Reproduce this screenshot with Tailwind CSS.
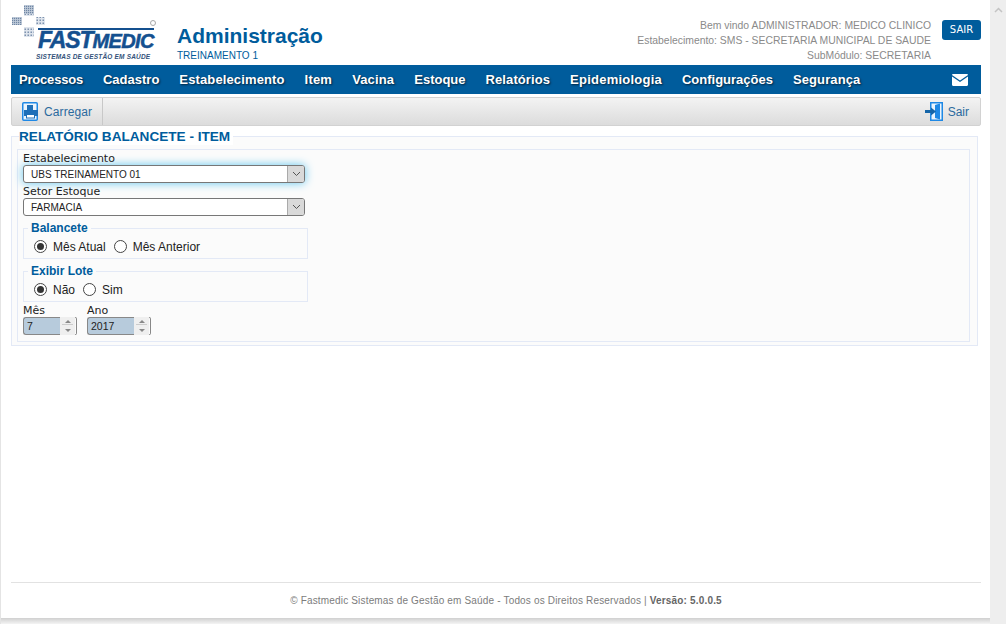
<!DOCTYPE html>
<html lang="pt-BR">
  <head>
    <meta charset="UTF-8" />
    <title>Administração</title>
    <script src="https://cdn.jsdelivr.net/npm/@tailwindcss/browser@4"></script>
  </head>
  <body class="bg-white overflow-hidden font-['Liberation_Sans',Arial,sans-serif]">
    <div class="flex w-[1006px] h-[624px]">
      <!-- page -->
      <div class="relative w-[990px] h-[624px] flex flex-col border-l border-[#e4e4e4] pl-[10px] pr-[9px]">
        <!-- header -->
        <header class="h-[65px] flex shrink-0">
          <div class="relative w-[166px] h-[65px]">
            <svg class="absolute left-[1px] top-[4px]" width="36" height="35" viewBox="0 0 36 35">
              <defs>
                <pattern id="dots" width="2" height="2" patternUnits="userSpaceOnUse">
                  <rect width="2" height="2" fill="#c3cedc" />
                  <rect width="1.2" height="1.2" fill="#6f86a4" />
                </pattern>
                <pattern id="rings" width="3" height="3" patternUnits="userSpaceOnUse">
                  <rect width="3" height="3" fill="#dfe5ed" />
                  <rect x="0.5" y="0.5" width="1.5" height="1.5" fill="#7d92ae" />
                </pattern>
              </defs>
              <rect x="12" y="1" width="10" height="9" fill="url(#dots)" />
              <rect x="12" y="10" width="10" height="2" fill="url(#rings)" />
              <rect x="0" y="13" width="10" height="8" fill="url(#dots)" />
              <rect x="24" y="13" width="9" height="8" fill="url(#rings)" />
              <rect x="12" y="23" width="10" height="10" fill="url(#rings)" />
            </svg>
            <div class="absolute left-[27px] top-[28px] w-[116px] h-[2px] bg-[#14508f]"></div>
            <div class="absolute left-[27px] top-[29px] w-[117px] text-[#14508f] text-[23px] leading-[23px] font-bold italic tracking-[-1.1px] whitespace-nowrap [-webkit-text-stroke:0.5px_#14508f]">FAST<span class="text-[20px] tracking-[-0.6px]">MEDIC</span></div>
            <div class="absolute left-[25px] top-[53px] text-[#33527a] text-[6.5px] leading-[8px] font-bold italic tracking-[0.18px] whitespace-nowrap">SISTEMAS DE GESTÃO EM SAÚDE</div>
            <div class="absolute left-[139px] top-[20px] w-[6px] h-[6px] rounded-full border border-[#a8a8a8]"></div>
          </div>
          <div class="pt-[23px]">
            <h1 class="text-[#005c9c] text-[21px] leading-[26px] font-bold">Administração</h1>
            <p class="text-[#005c9c] text-[10px] leading-[12px] mt-[1px]">TREINAMENTO 1</p>
          </div>
          <div class="ml-auto pt-[18px] text-right text-[#8a8a8a] text-[10.4px] leading-[15px]">
            <p>Bem vindo ADMINISTRADOR: MEDICO CLINICO</p>
            <p>Estabelecimento: SMS - SECRETARIA MUNICIPAL DE SAUDE</p>
            <p>SubMódulo: SECRETARIA</p>
          </div>
          <div class="w-[50px] pl-[11px] pt-[20px]">
            <button class="block w-[39px] h-[20px] rounded-[3px] bg-[#005c9c] text-white text-[10px] leading-[20px] font-['DejaVu_Sans',sans-serif]">SAIR</button>
          </div>
        </header>

        <!-- main menu -->
        <nav class="h-[29px] shrink-0 bg-[#005c9c] flex items-center pl-[8px] pr-[13px] gap-[20px] text-white text-[13px] font-bold [text-shadow:1px_1px_2px_#00213a]">
          <span class="tracking-[-0.2px]">Processos</span>
          <span>Cadastro</span>
          <span class="tracking-[0.13px]">Estabelecimento</span>
          <span class="tracking-[0.2px]">Item</span>
          <span class="tracking-[0.15px]">Vacina</span>
          <span>Estoque</span>
          <span class="tracking-[0.1px]">Relatórios</span>
          <span class="tracking-[0.23px]">Epidemiologia</span>
          <span>Configurações</span>
          <span class="tracking-[0.1px]">Segurança</span>
          <svg class="ml-auto" width="16" height="12" viewBox="0 0 16 12">
            <path d="M1.2 0h13.6c.6 0 1.2.5 1.2 1.1L8 6.6 0 1.1C0 .5.6 0 1.2 0z" fill="#fff" />
            <path d="M0 2.6v8.2c0 .7.5 1.2 1.2 1.2h13.6c.7 0 1.2-.5 1.2-1.2V2.6L8 8.1z" fill="#fff" />
          </svg>
        </nav>

        <!-- toolbar -->
        <div class="h-[29px] mt-[3px] shrink-0 flex items-center rounded-[2px] border border-[#d2d2d2] bg-gradient-to-b from-[#f3f3f3] to-[#dcdcdc] text-[#2b6a9e] text-[12px]">
          <div class="h-full flex items-center gap-[6px] pl-[10px] pr-[10px] border-r border-[#c8c8c8]">
            <svg width="16" height="19" viewBox="0 0 16 19">
              <rect x="0.75" y="0.75" width="14.5" height="17.5" rx="1" fill="#eaf4fd" stroke="#1e88e5" stroke-width="1.5" />
              <rect x="5" y="3" width="6" height="5" fill="#1e6fb8" />
              <rect x="2" y="8" width="14" height="6" fill="#1e6fb8" />
              <rect x="4.5" y="12.5" width="8" height="3.5" fill="#fff" stroke="#1e6fb8" />
            </svg>
            <span class="tracking-[0.1px]">Carregar</span>
          </div>
          <div class="ml-auto flex items-center gap-[5px] pr-[11px]">
            <svg width="18" height="19" viewBox="0 0 18 19">
              <path d="M5.75.75h11.5v17.5H5.75z" fill="#eaf4fd" stroke="#1e88e5" stroke-width="1.5" />
              <path d="M10 3l5-1.5v16L10 16z" fill="#1e88e5" />
              <path d="M0 8h6V5.5l5 4-5 4V11H0z" fill="#1565a8" />
            </svg>
            <span>Sair</span>
          </div>
        </div>

        <!-- report form -->
        <fieldset class="mt-[2px] w-[967px] h-[218px] shrink-0 border border-[#e3e9f6] pl-[5px] pr-[7px] pb-[3px] bg-[#fbfbfb]">
          <legend class="ml-[2px] pr-[3px] bg-white text-[#005c9c] text-[13.6px] leading-[17px] font-bold">RELATÓRIO BALANCETE - ITEM</legend>
          <div class="h-[193px] mt-[4px] border border-[#e3e9f6] pl-[5px] text-[#222] font-['DejaVu_Sans',sans-serif] text-[11px]">
            <label class="block mt-[2px] leading-[13px]">Estabelecimento</label>
            <div class="w-[282px] h-[18px] flex items-center rounded-[3px] border border-[#777] bg-white shadow-[0_0_10px_#62c6ee] font-['Liberation_Sans',sans-serif] text-[10px]">
              <span class="pl-[7px] pt-[1px] flex-1">UBS TREINAMENTO 01</span>
              <span class="w-[17px] h-full flex items-center justify-center bg-[#d9d9d9] border-l border-[#aaa] rounded-r-[2px]">
                <svg width="9" height="6" viewBox="0 0 9 6"><path d="M1 1l3.5 3.5L8 1" fill="none" stroke="#555" /></svg>
              </span>
            </div>
            <label class="block mt-[2px] leading-[13px]">Setor Estoque</label>
            <div class="w-[282px] h-[18px] flex items-center rounded-[3px] border border-[#777] bg-white font-['Liberation_Sans',sans-serif] text-[10px]">
              <span class="pl-[7px] pt-[1px] flex-1">FARMACIA</span>
              <span class="w-[17px] h-full flex items-center justify-center bg-[#d9d9d9] border-l border-[#aaa] rounded-r-[2px]">
                <svg width="9" height="6" viewBox="0 0 9 6"><path d="M1 1l3.5 3.5L8 1" fill="none" stroke="#555" /></svg>
              </span>
            </div>

            <fieldset class="w-[285px] h-[38px] mt-[5px] border border-[#e3e9f6] pl-[10px] font-['Liberation_Sans',sans-serif] text-[12px]">
              <legend class="ml-[-6px] px-[3px] bg-[#fbfbfb] text-[#005c9c] text-[12px] leading-[14px] font-bold">Balancete</legend>
              <div class="flex items-center h-[18px] mt-[2px]">
                <span class="w-[13px] h-[13px] rounded-full border border-[#444] flex items-center justify-center bg-white"><span class="w-[7px] h-[7px] rounded-full bg-[#333]"></span></span>
                <span class="ml-[6px] mt-[2px]">Mês Atual</span>
                <span class="ml-[8px] w-[13px] h-[13px] rounded-full border border-[#444] bg-white"></span>
                <span class="ml-[6px] mt-[2px]">Mês Anterior</span>
              </div>
            </fieldset>
            <fieldset class="w-[285px] h-[38px] mt-[5px] border border-[#e3e9f6] pl-[10px] font-['Liberation_Sans',sans-serif] text-[12px]">
              <legend class="ml-[-6px] px-[3px] bg-[#fbfbfb] text-[#005c9c] text-[12px] leading-[14px] font-bold">Exibir Lote</legend>
              <div class="flex items-center h-[18px] mt-[2px]">
                <span class="w-[13px] h-[13px] rounded-full border border-[#444] flex items-center justify-center bg-white"><span class="w-[7px] h-[7px] rounded-full bg-[#333]"></span></span>
                <span class="ml-[6px] mt-[2px]">Não</span>
                <span class="ml-[8px] w-[13px] h-[13px] rounded-full border border-[#444] bg-white"></span>
                <span class="ml-[6px] mt-[2px]">Sim</span>
              </div>
            </fieldset>

            <div class="flex gap-[10px] mt-[3px]">
              <div>
                <label class="block leading-[12px]">Mês</label>
                <div class="w-[54px] h-[18px] flex font-['Liberation_Sans',sans-serif] text-[10.5px]">
                  <span class="w-[37px] bg-[#b7cbdc] border border-r-0 border-[#888] rounded-l-[3px] pl-[3px] leading-[16px]">7</span>
                  <span class="w-[15px] flex flex-col items-center justify-center gap-[2px] bg-[#efefef]">
                    <span class="w-[11px] h-[6px] flex items-center justify-center border-b border-[#ccc]"><svg width="6" height="3" viewBox="0 0 6 3"><path d="M3 0l3 3H0z" fill="#888" /></svg></span>
                    <span class="w-[11px] h-[6px] flex items-center justify-center"><svg width="6" height="3" viewBox="0 0 6 3"><path d="M3 3l3-3H0z" fill="#888" /></svg></span>
                  </span>
                  <span class="w-[2px] border-r border-y border-[#888] rounded-r-[2px]"></span>
                </div>
              </div>
              <div>
                <label class="block leading-[12px]">Ano</label>
                <div class="w-[64px] h-[18px] flex font-['Liberation_Sans',sans-serif] text-[10.5px]">
                  <span class="w-[47px] bg-[#b7cbdc] border border-r-0 border-[#888] rounded-l-[3px] pl-[3px] leading-[16px]">2017</span>
                  <span class="w-[15px] flex flex-col items-center justify-center gap-[2px] bg-[#efefef]">
                    <span class="w-[11px] h-[6px] flex items-center justify-center border-b border-[#ccc]"><svg width="6" height="3" viewBox="0 0 6 3"><path d="M3 0l3 3H0z" fill="#888" /></svg></span>
                    <span class="w-[11px] h-[6px] flex items-center justify-center"><svg width="6" height="3" viewBox="0 0 6 3"><path d="M3 3l3-3H0z" fill="#888" /></svg></span>
                  </span>
                  <span class="w-[2px] border-r border-y border-[#888] rounded-r-[2px]"></span>
                </div>
              </div>
            </div>
          </div>
        </fieldset>

        <!-- footer -->
        <footer class="mt-auto mb-[6px] h-[36px] border-t border-[#e2e2e2] pl-[20px] text-center text-[#7c7c7c] text-[10px] tracking-[0.17px] leading-[35px]">
          © Fastmedic Sistemas de Gestão em Saúde - Todos os Direitos Reservados | <b class="text-[#666]">Versão: 5.0.0.5</b>
        </footer>
        <div class="absolute left-0 right-0 bottom-0 h-[6px] bg-gradient-to-b from-[#d0d0d0] to-[#f4f4f4]"></div>
      </div>
      <!-- scrollbar -->
      <div class="w-[16px] h-[624px] bg-[#eeeeee] flex justify-center pt-[7px]">
        <svg width="9" height="6" viewBox="0 0 9 6"><path d="M1 5l3.5-3.5L8 5" fill="none" stroke="#c4c4c4" stroke-width="1.5" /></svg>
      </div>
    </div>
  </body>
</html>
